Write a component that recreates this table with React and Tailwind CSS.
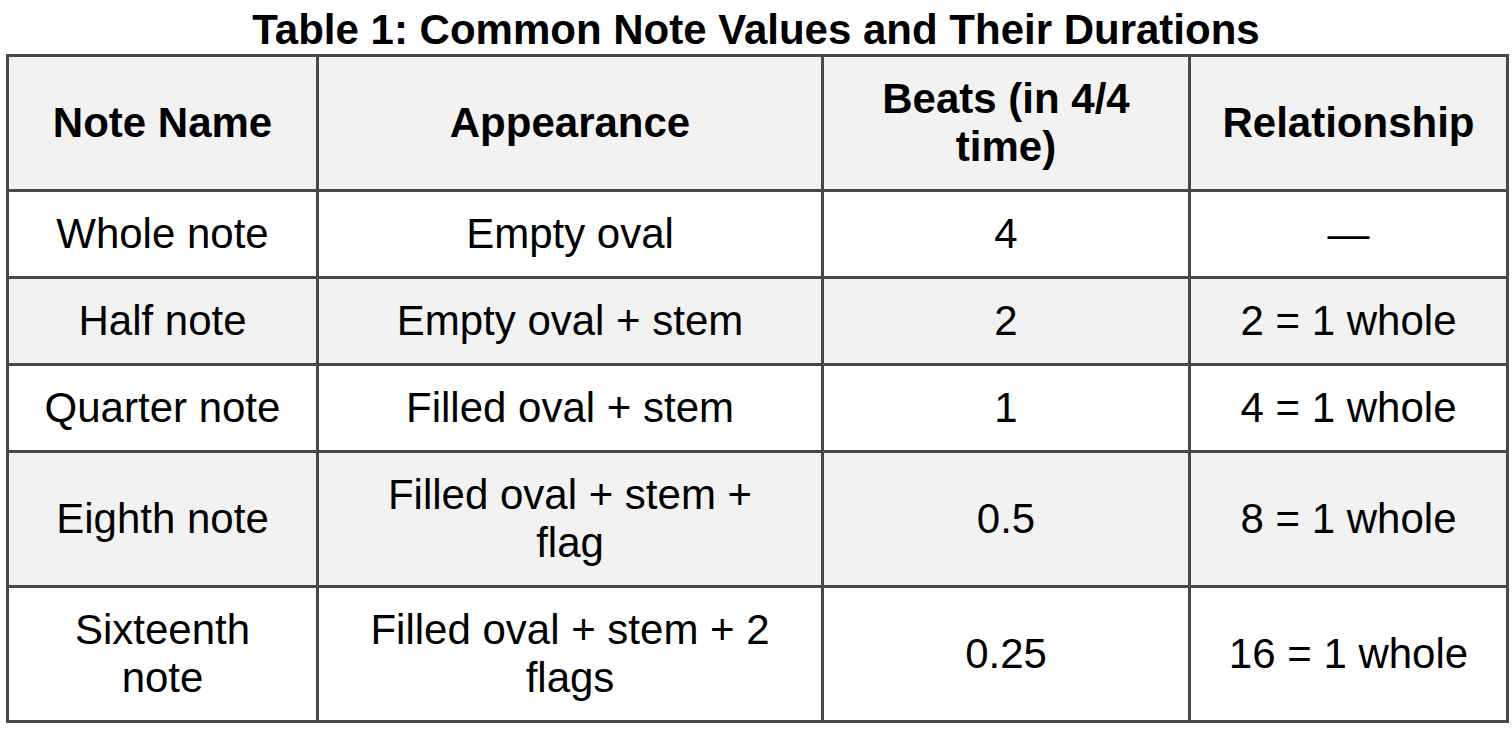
const rows = [
  { name: ["Whole note"], look: ["Empty oval"], beats: "4", rel: "—" },
  { name: ["Half note"], look: ["Empty oval + stem"], beats: "2", rel: "2 = 1 whole" },
  { name: ["Quarter note"], look: ["Filled oval + stem"], beats: "1", rel: "4 = 1 whole" },
  { name: ["Eighth note"], look: ["Filled oval + stem +", "flag"], beats: "0.5", rel: "8 = 1 whole" },
  { name: ["Sixteenth", "note"], look: ["Filled oval + stem + 2", "flags"], beats: "0.25", rel: "16 = 1 whole" },
];

const Lines = ({ lines }) =>
  lines.map((l, i) => (
    <span key={i} className="block">
      {l}
    </span>
  ));

export default function App() {
  return (
    <div className="bg-white min-h-[729px] w-[1512px] text-black font-['Liberation_Sans',Arial,sans-serif] text-[42px] leading-[48px]">
      <h1 className="text-center font-bold pt-[6px]">
        Table 1: Common Note Values and Their Durations
      </h1>

      <div className="px-[6px]">
        <table className="border-collapse w-[1500px] table-fixed text-center">
          <colgroup>
            <col className="w-[310px]" />
            <col className="w-[505px]" />
            <col className="w-[367px]" />
            <col className="w-[318px]" />
          </colgroup>
          <thead>
            <tr className="bg-[#f2f2f2]">
              {["Note Name", "Appearance", ["Beats (in 4/4", "time)"], "Relationship"].map((h, i) => (
                <th
                  key={i}
                  className="border-[3px] border-[#484848] py-[18px] px-2 font-bold align-middle"
                >
                  {Array.isArray(h) ? <Lines lines={h} /> : h}
                </th>
              ))}
            </tr>
          </thead>
          <tbody>
            {rows.map((r, i) => (
              <tr key={i} className={i % 2 === 1 ? "bg-[#f2f2f2]" : "bg-white"}>
                <td className="border-[3px] border-[#484848] py-[18px] px-2 align-middle">
                  <Lines lines={r.name} />
                </td>
                <td className="border-[3px] border-[#484848] py-[18px] px-2 align-middle">
                  <Lines lines={r.look} />
                </td>
                <td className="border-[3px] border-[#484848] py-[18px] px-2 align-middle">
                  {r.beats}
                </td>
                <td className="border-[3px] border-[#484848] py-[18px] px-2 align-middle">
                  {r.rel}
                </td>
              </tr>
            ))}
          </tbody>
        </table>
      </div>
    </div>
  );
}
